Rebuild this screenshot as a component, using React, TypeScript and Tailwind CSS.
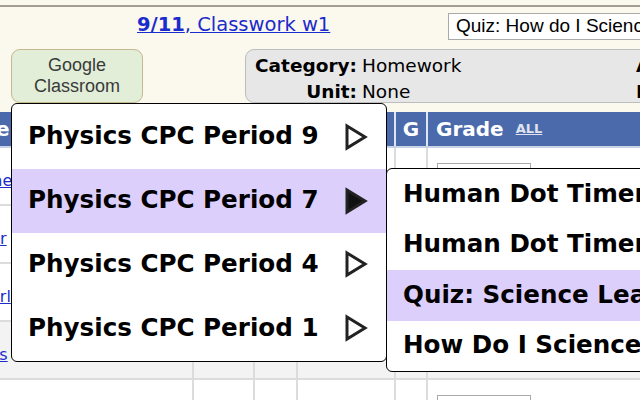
import React from "react";

const rows = [
    { link: "the", shift: "-ml-[14px]", bg: "bg-white" },
    { link: "tar", shift: "-ml-[16px]", bg: "bg-white" },
    { link: "arl", shift: "-ml-[10px]", bg: "bg-white" },
    { link: "ss", shift: "-ml-[9px]", bg: "bg-[#f3f3f3]" },
    { link: "", shift: "", bg: "bg-white" },
];

const periods = ["Physics CPC Period 9", "Physics CPC Period 7", "Physics CPC Period 4", "Physics CPC Period 1"];
const assignments = ["Human Dot Timer 1", "Human Dot Timer 2", "Quiz: Science Learning", "How Do I Science"];

function Arrow({ filled }: { filled?: boolean }) {
    return (
        <svg width="26" height="30" viewBox="0 0 26 30" className="shrink-0">
            <path
                d="M4 4 L22 15 L4 26 Z"
                fill={filled ? "#111" : "none"}
                stroke="#222"
                strokeWidth="3"
                strokeLinejoin="miter"
            />
        </svg>
    );
}

export default function App() {
    return (
        <div className="relative h-[400px] w-[640px] overflow-hidden bg-[#fbf8ee] font-['DejaVu_Sans',sans-serif] text-black">
            <div className="h-[7px] border-b-2 border-[#a39d92]" />

            {/* top line: date link + assignment select */}
            <div className="grid h-[36px] grid-cols-[448px_1fr] items-center">
                <div className="pl-[137px] text-[19.5px] text-[#1b2ccc]">
                    <a className="underline">
                        <b>9/11</b>, Classwork w1
                    </a>
                </div>
                <div className="mt-[2px] flex h-[27px] w-[230px] items-center overflow-hidden border border-[#a9a9a9] bg-white pl-[7px] font-['Liberation_Sans',sans-serif] text-[19px] whitespace-nowrap">
                    Quiz: How do I Science?
                </div>
            </div>

            {/* second line: classroom button + info box */}
            <div className="mt-[6px] flex h-[54px] pl-[11px]">
                <div className="flex w-[132px] shrink-0 flex-col items-center justify-center rounded-[9px] border border-[#c7b98f] bg-[#e2eed8] font-['Liberation_Sans',sans-serif] text-[18px] leading-[21px] text-[#3a3a3a]">
                    <span>Google</span>
                    <span>Classroom</span>
                </div>
                <div className="ml-[102px] flex w-[520px] shrink-0 rounded-l-[9px] border border-[#bdbdbd] bg-[#e7e7e7] pt-[3px] pl-[9px] text-[18.5px] leading-[26px]">
                    <div className="flex shrink-0 flex-col items-end font-bold">
                        <span>Category:</span>
                        <span>Unit:</span>
                    </div>
                    <div className="ml-[5px] flex w-[274px] shrink-0 flex-col">
                        <span>Homework</span>
                        <span>None</span>
                    </div>
                    <div className="flex shrink-0 flex-col font-bold whitespace-nowrap">
                        <span>Assigned:</span>
                        <span>Due:</span>
                    </div>
                </div>
            </div>

            {/* grade table */}
            <div className="mt-[9px] w-[660px]">
                <div className="grid h-[36px] grid-cols-[396px_32px_1fr] border-b-2 border-[#c9d3e6] bg-[#4a6aab] font-bold text-white">
                    <div className="flex items-center overflow-hidden border-r-2 border-[#dfe5f1]">
                        <span className="-ml-[55px] text-[20px]">Name</span>
                    </div>
                    <div className="flex items-center justify-center border-r-2 border-[#dfe5f1] text-[20px]">G</div>
                    <div className="flex items-center pl-[8px]">
                        <span className="text-[20px]">Grade</span>
                        <span className="ml-[12px] text-[13px] text-[#dfe3ef] underline">ALL</span>
                    </div>
                </div>
                {rows.map((r, i) => (
                    <div
                        key={i}
                        className={`grid h-[58px] grid-cols-[194px_61px_43px_98px_32px_1fr] border-b-2 border-[#dcdcdc] ${r.bg}`}
                    >
                        <div className="flex items-center overflow-hidden border-r-2 border-[#dcdcdc] pt-[10px]">
                            <span className={`${r.shift} text-[16px] text-[#1b2ccc] underline`}>{r.link}</span>
                        </div>
                        <div className="border-r-2 border-[#dcdcdc]" />
                        <div className="border-r-2 border-[#dcdcdc]" />
                        <div className="border-r-2 border-[#dcdcdc]" />
                        <div className="border-r-2 border-[#dcdcdc]" />
                        <div className="pt-[15px] pl-[9px]">
                            <div className="h-[26px] w-[94px] border border-[#a9a9a9] bg-white" />
                        </div>
                    </div>
                ))}
            </div>

            {/* period menu */}
            <div className="absolute top-[103px] left-[11px] flex h-[259px] w-[376px] flex-col overflow-hidden rounded-[6px] border border-black bg-white py-[1px]">
                {periods.map((p, i) => (
                    <div
                        key={p}
                        className={`flex h-[64px] items-center justify-between pr-[17px] pl-[16px] text-[24.6px] font-bold whitespace-nowrap ${
                            i === 1 ? "bg-[#ddcffc]" : ""
                        }`}
                    >
                        <span>{p}</span>
                        <Arrow filled={i === 1} />
                    </div>
                ))}
            </div>

            {/* assignment submenu */}
            <div className="absolute top-[168px] left-[386px] flex h-[204px] w-[280px] flex-col overflow-hidden rounded-[6px] border border-black bg-white">
                {assignments.map((a, i) => (
                    <div
                        key={a}
                        className={`flex h-[51px] items-center pl-[16px] text-[24.6px] font-bold whitespace-nowrap ${
                            i === 2 ? "bg-[#ddcffc]" : ""
                        }`}
                    >
                        {a}
                    </div>
                ))}
            </div>
        </div>
    );
}
